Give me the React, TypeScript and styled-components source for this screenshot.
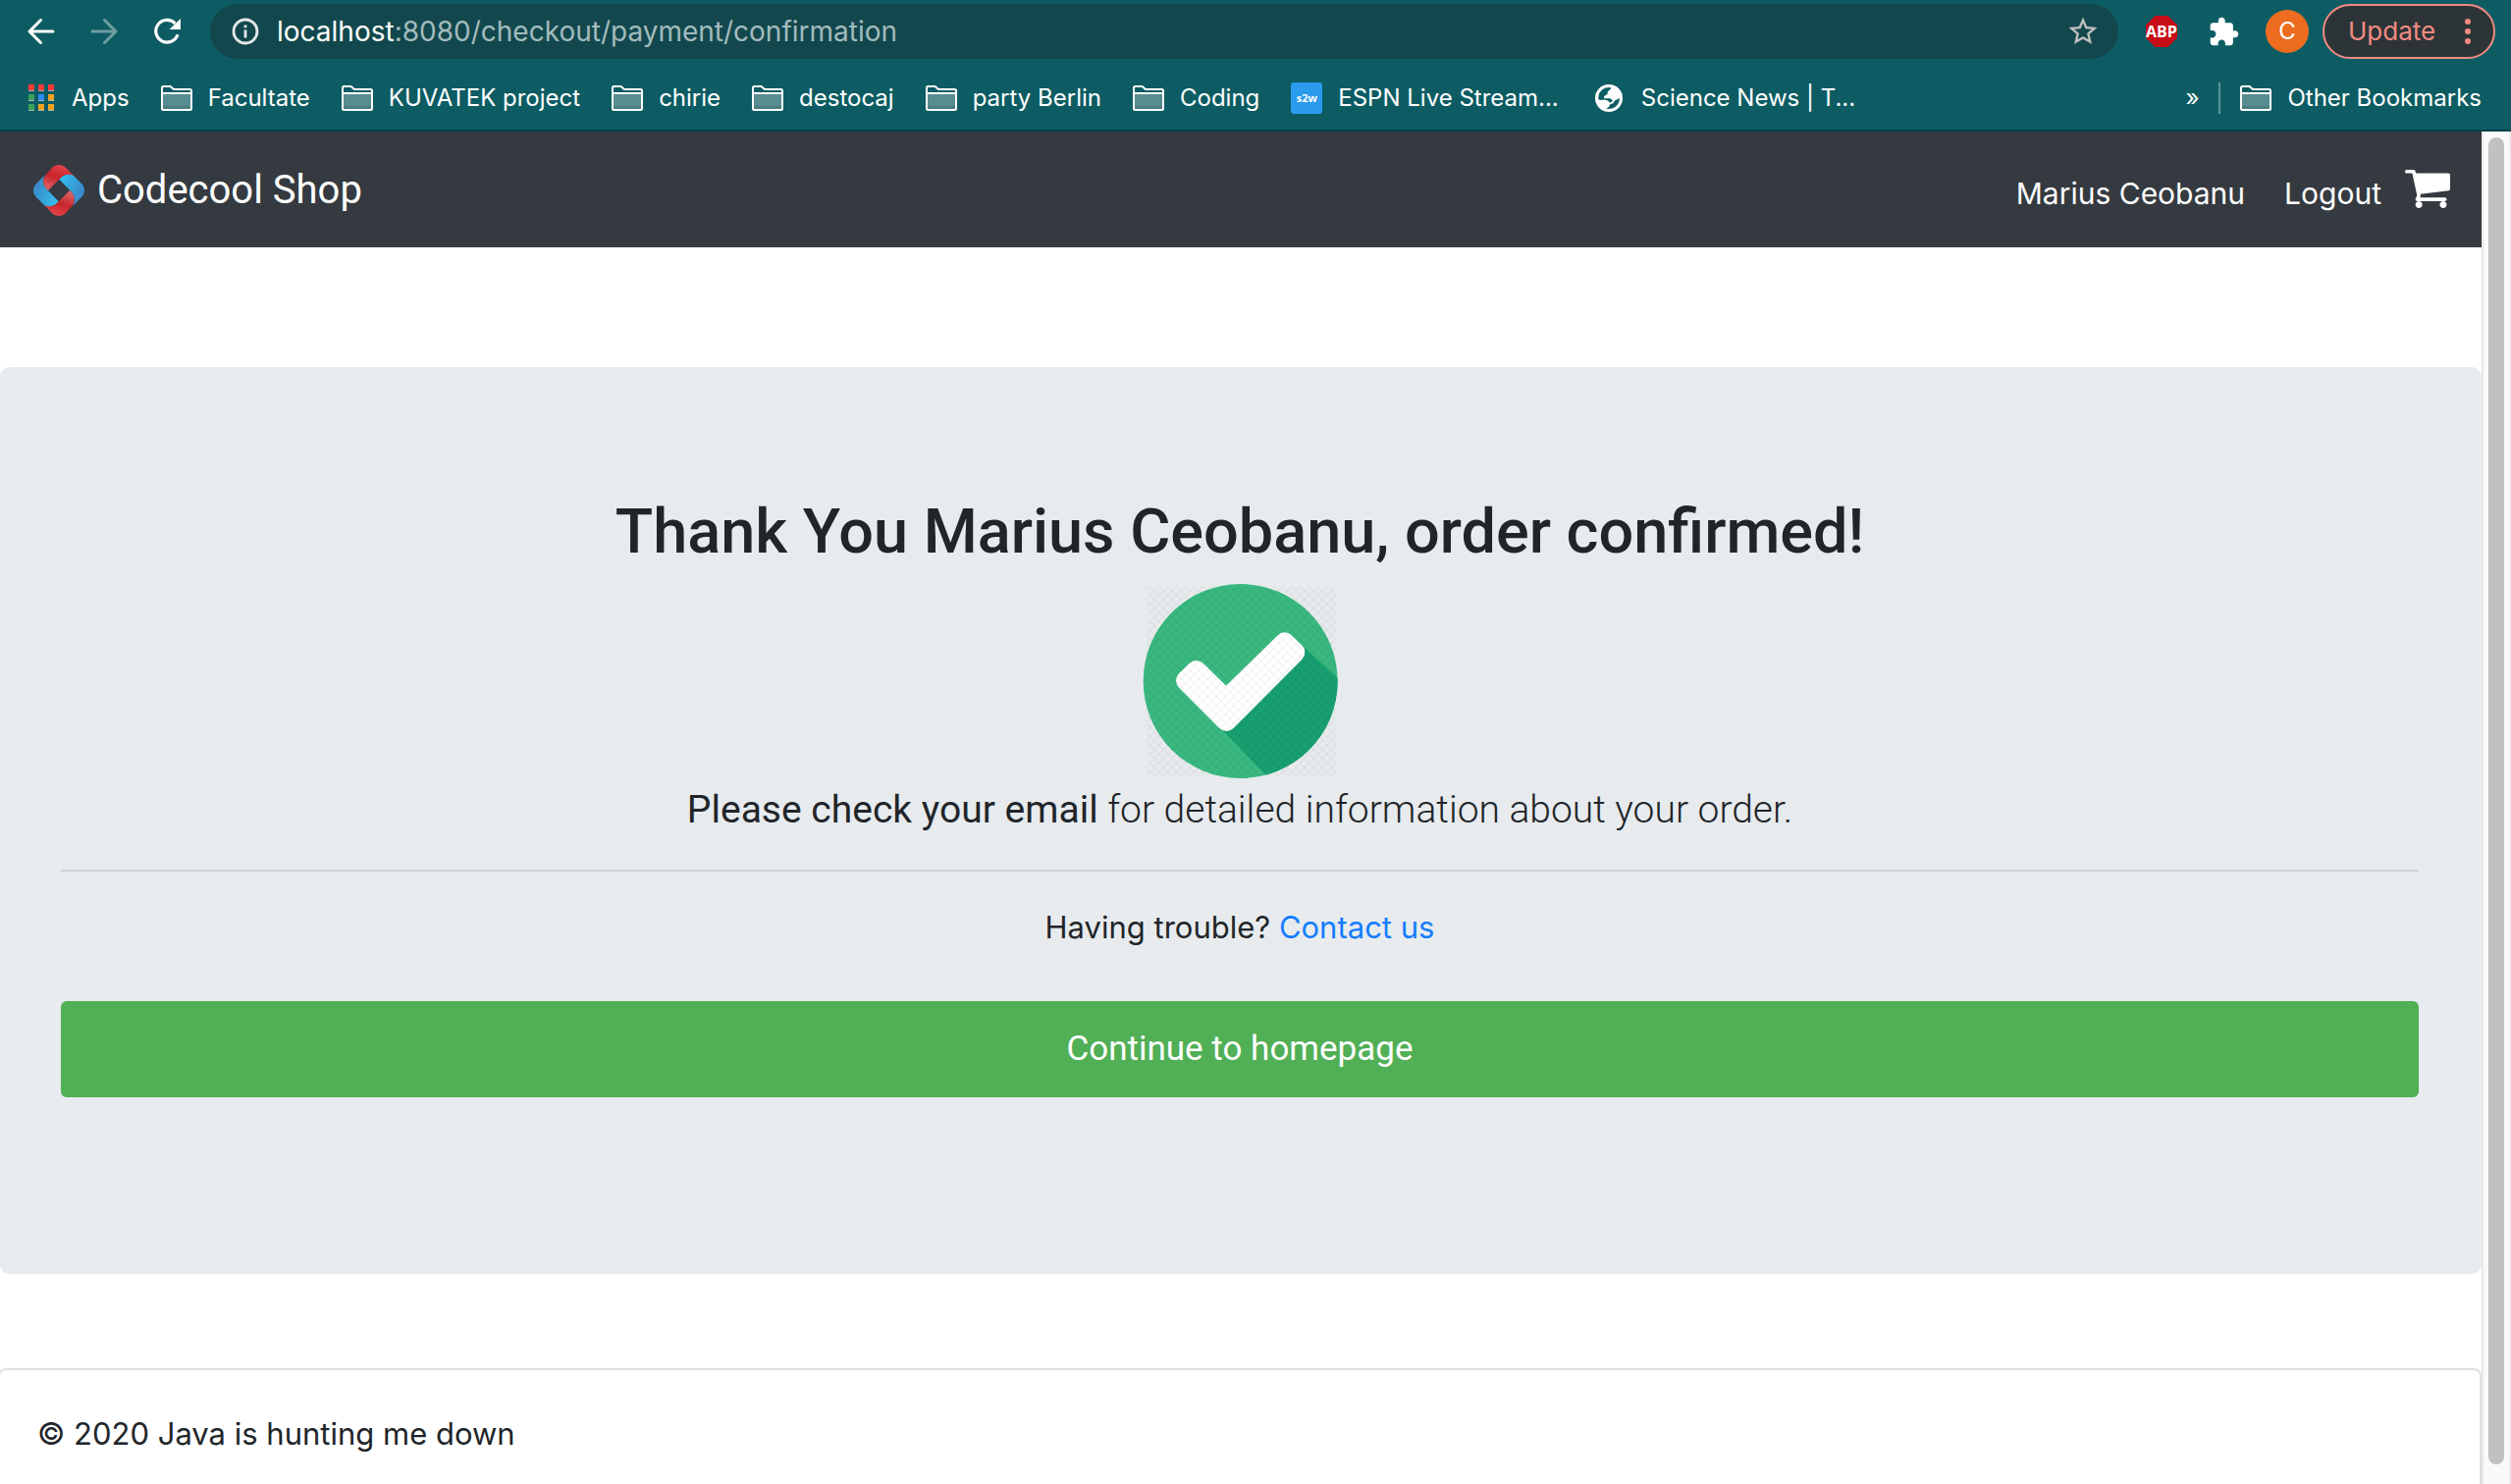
import React from "react";
import styled, { createGlobalStyle } from "styled-components";

const GlobalStyle = createGlobalStyle`
  *, *::before, *::after { box-sizing: border-box; }
  body { margin: 0; background: #ffffff; }
  button, input { font: inherit; }
`;

const displayFont = `Roboto, "Liberation Sans", sans-serif`;

const Shell = styled.div`
  display: flex;
  flex-direction: column;
  height: 100vh;
  overflow: hidden;
  font-family: Inter, "Liberation Sans", sans-serif;
  font-size: 32px;
  line-height: 50px;
  color: #212529;
`;

/* ---------- browser chrome ---------- */

const Chrome = styled.header`
  flex: none;
  background: #0d5c63;
  border-bottom: 2px solid #064147;
  color: #ffffff;
`;

const Toolbar = styled.div`
  display: flex;
  align-items: center;
  height: 64px;
  padding: 0 16px 0 10px;
`;

const IconButton = styled.button<{ $dim?: boolean }>`
  display: grid;
  place-items: center;
  flex: none;
  width: 64px;
  height: 56px;
  padding: 0;
  border: 0;
  background: none;
  color: ${(p) => (p.$dim ? "#6e9da1" : "#ffffff")};
`;

const Omnibox = styled.div`
  display: flex;
  flex: 1;
  align-items: center;
  gap: 18px;
  min-width: 0;
  height: 56px;
  margin: 0 12px;
  padding: 0 20px 0 22px;
  border-radius: 28px;
  background: #12484d;
  color: #a3bbbe;
`;

const Address = styled.div`
  flex: 1;
  overflow: hidden;
  font-size: 28px;
  line-height: 36px;
  white-space: nowrap;
  outline: 0;
`;

const Host = styled.span`
  color: #ffffff;
`;

const StarButton = styled.button`
  display: grid;
  padding: 0;
  border: 0;
  background: none;
  color: #bfbfbf;
`;

const Avatar = styled.button`
  flex: none;
  width: 44px;
  height: 44px;
  margin: 0 14px 0 10px;
  padding: 0;
  border: 0;
  border-radius: 50%;
  background: #ed6c1f;
  color: #ffffff;
  font-size: 24px;
  line-height: 44px;
`;

const UpdateButton = styled.button`
  display: flex;
  align-items: center;
  justify-content: space-between;
  flex: none;
  width: 176px;
  height: 56px;
  padding: 0 23px 0 24px;
  border: 2px solid #f28b82;
  border-radius: 28px;
  background: #2c3437;
  color: #f28b82;
  font-size: 26px;
  line-height: 36px;
`;

const BookmarksBar = styled.nav`
  display: flex;
  align-items: center;
  gap: 32px;
  height: 68px;
  padding: 4px 30px 0 29px;
`;

const Bookmark = styled.a`
  display: flex;
  align-items: center;
  gap: 16px;
  flex: none;
  color: #ffffff;
  font-size: 24px;
  line-height: 32px;
  white-space: nowrap;
  text-decoration: none;
`;

const SiteIcon = styled.span`
  display: grid;
  place-items: center;
  width: 32px;
  height: 32px;
  border-radius: 3px;
  background: #2b9ced;
  font-family: "Open Sans", sans-serif;
  font-size: 11px;
  font-weight: 700;
  line-height: 12px;
`;

const BarEnd = styled.div`
  display: flex;
  align-items: center;
  gap: 20px;
  margin-left: auto;
`;

const More = styled.button`
  padding: 0;
  border: 0;
  background: none;
  color: #ffffff;
  font-size: 24px;
  line-height: 32px;
`;

const Divider = styled.span`
  width: 2px;
  height: 32px;
  background: #5c9397;
`;

/* ---------- page ---------- */

const Viewport = styled.div`
  display: grid;
  grid-template-columns: minmax(0, 1fr) 30px;
  flex: 1;
  min-height: 0;
`;

const Page = styled.div`
  overflow: hidden;
`;

const Navbar = styled.nav`
  display: flex;
  align-items: center;
  justify-content: space-between;
  height: 118px;
  padding: 2px 32px 0 34px;
  background: #343a40;
`;

const Brand = styled.a`
  display: flex;
  align-items: center;
  gap: 13px;
  color: #ffffff;
  font-family: ${displayFont};
  font-size: 40px;
  line-height: 60px;
  text-decoration: none;
`;

const NavLinks = styled.div`
  display: flex;
  align-items: center;
  gap: 40px;
`;

const NavLink = styled.a`
  padding-top: 6px;
  color: #ffffff;
  font-size: 30px;
  text-decoration: none;
`;

const CartLink = styled.a`
  display: grid;
  margin: 0 0 4px -16px;
  color: #ffffff;
`;

const Jumbotron = styled.main`
  margin: 122px 0 96px;
  padding: 128px 64px 180px 62px;
  border-radius: 10px;
  background: #e7ebee;
  text-align: center;
`;

const Title = styled.h1`
  margin: 0 0 12px;
  font-family: ${displayFont};
  font-size: 63px;
  font-weight: 500;
  line-height: 80px;
`;

const Lead = styled.p`
  margin: 0;
  font-family: ${displayFont};
  font-size: 39px;
  font-weight: 300;
  line-height: 62px;
`;

const Strong = styled.strong`
  font-weight: 400;
`;

const Rule = styled.hr`
  height: 2px;
  margin: 30px 0 32px;
  border: 0;
  background: #d0d4d7;
`;

const Help = styled.p`
  margin: 0 0 50px;
  font-size: 31px;
`;

const ContactLink = styled.a`
  color: #147dfd;
  text-decoration: none;
`;

const ContinueButton = styled.button`
  display: block;
  width: 100%;
  height: 98px;
  border: 0;
  border-radius: 6px;
  background: #51af56;
  color: #ffffff;
  font-family: ${displayFont};
  font-size: 35px;
  line-height: 50px;
`;

const Footer = styled.footer`
  height: 160px;
  margin-left: -2px;
  padding: 40px 38px;
  border: 2px solid #dfdfdf;
  border-radius: 8px;
  font-size: 31px;
`;

const ScrollTrack = styled.div`
  display: flex;
  justify-content: center;
  padding: 6px 0 20px;
  border-right: 2px solid #ededed;
  border-left: 2px solid #e8e8e8;
  background: #fafafa;
`;

const ScrollThumb = styled.div`
  width: 16px;
  border-radius: 8px;
  background: #c1c1c1;
`;

const Picture = styled.svg`
  display: block;
  flex: none;
`;

const CheckPicture = styled(Picture)`
  margin: 0 auto;
`;

/* ---------- drawings ---------- */

const Arrow = ({ forward = false }: { forward?: boolean }) => (
  <Picture width="28" height="28" viewBox="0 0 28 28" fill="none" stroke="currentColor" strokeWidth="3" strokeLinecap="round" strokeLinejoin="round">
    {forward ? <path d="M2 14H26M14.5 2.5L26 14L14.5 25.5" /> : <path d="M26 14H2M13.5 2.5L2 14L13.5 25.5" />}
  </Picture>
);

const Reload = () => (
  <Picture width="28" height="28" viewBox="0 0 28 28">
    <path d="M22.4 5.8A11.4 11.4 0 1 0 25 17.3" fill="none" stroke="currentColor" strokeWidth="3.2" />
    <path d="M28 1V12H16.5Z" fill="currentColor" />
  </Picture>
);

const Info = () => (
  <Picture width="28" height="28" viewBox="0 0 28 28">
    <circle cx="14" cy="14" r="12" fill="none" stroke="#e4e8e9" strokeWidth="2.8" />
    <path d="M12.6 12.4h2.8v8.2h-2.8zM12.6 7.4h2.8v2.8h-2.8z" fill="#e4e8e9" />
  </Picture>
);

const Star = () => (
  <Picture width="32" height="32" viewBox="1 1 22 22" fill="currentColor">
    <path d="M22 9.24l-7.19-.62L12 2 9.19 8.63 2 9.24l5.46 4.73L5.82 21 12 17.27 18.18 21l-1.63-7.03L22 9.24zM12 15.4l-3.76 2.27 1-4.28-3.32-2.88 4.38-.38L12 6.1l1.71 4.04 4.38.38-3.32 2.88 1 4.28L12 15.4z" />
  </Picture>
);

const AdBlock = () => (
  <Picture width="32" height="32" viewBox="0 0 32 32">
    <path d="M9.5 0H22.5L32 9.5V22.5L22.5 32H9.5L0 22.5V9.5Z" fill="#c70d17" />
    <text x="16" y="22" fill="#ffffff" fontFamily="Open Sans, sans-serif" fontSize="16" fontWeight="700" textAnchor="middle">ABP</text>
  </Picture>
);

const Puzzle = () => (
  <Picture width="30" height="30" viewBox="1.5 .5 22 22" fill="currentColor">
    <path d="M20.5 11H19V7c0-1.1-.9-2-2-2h-4V3.5C13 2.12 11.88 1 10.5 1S8 2.12 8 3.5V5H4c-1.1 0-1.99.9-1.99 2v3.8H3.5c1.49 0 2.7 1.21 2.7 2.7s-1.21 2.7-2.7 2.7H2V20c0 1.1.9 2 2 2h3.8v-1.5c0-1.49 1.21-2.7 2.7-2.7 1.49 0 2.7 1.21 2.7 2.7V22H17c1.1 0 2-.9 2-2v-4h1.5c1.38 0 2.5-1.12 2.5-2.5S21.88 11 20.5 11z" />
  </Picture>
);

const Dots = () => (
  <Picture width="6" height="28" viewBox="0 0 6 28" fill="currentColor">
    <circle cx="3" cy="4" r="3" />
    <circle cx="3" cy="14" r="3" />
    <circle cx="3" cy="24" r="3" />
  </Picture>
);

const appColours = ["#f63b37", "#f63b37", "#f63b37", "#3ba05c", "#2a8cf4", "#f3a21f", "#3ba05c", "#f3a21f", "#f3a21f"];

const AppsGrid = () => (
  <Picture width="28" height="28" viewBox="0 0 28 28">
    {appColours.map((colour, i) => (
      <g key={i} transform={`translate(${(i % 3) * 10} ${Math.floor(i / 3) * 10})`}>
        <rect width="6" height="7" fill="#9fb5b5" />
        <rect width="6" height="6" fill={colour} />
      </g>
    ))}
  </Picture>
);

const Folder = () => (
  <Picture width="32" height="26" viewBox="0 0 32 26">
    <path d="M2 9H30V24H2Z" fill="#578d90" />
    <path d="M2 21H30V24H2Z" fill="#4a7d7f" />
    <path d="M1 23.5V2.5Q1 1 2.5 1H9.5L13 4H29.5Q31 4 31 5.5V23.5Q31 25 29.5 25H2.5Q1 25 1 23.5ZM1 8H31" fill="none" stroke="#ffffff" strokeWidth="2" />
  </Picture>
);

const Globe = () => (
  <Picture width="36" height="28" viewBox="-5 0 36 28">
    <circle cx="14" cy="14" r="14" fill="#ffffff" />
    <path d="M16 3.2C10 2.500 4.800 6 3.500 11.500C3.200 13 3.200 14 3.400 15.200C5 16.500 8 15.500 10.500 15.800C12.500 16.200 14 17.200 14.500 18.500L17.500 17.500C17.800 15.500 16.500 14.200 14.200 14.200H9C9 12.500 9.200 11 11.500 10.800C13 10.500 12.500 9 12.800 7.800C13 6 16 6.200 16 3.200Z" fill="#0d5c63" />
    <path d="M11 24.500C16 26 22 23.500 24.200 18C24.800 16.500 24.900 15 24.700 13.500C23 16 20 15.500 19.300 17.800C18.500 20.500 15 19.500 14.600 21.500C14.400 23.500 12.500 23.800 11 24.500Z" fill="#0d5c63" />
  </Picture>
);

const redBand = "M26 0C28.600 0 31 1 32.800 2.800L40.500 10.500C36 9.200 32 9.700 29 12L15 26C10.500 22 8 16.500 12.500 10.200L19.200 2.800C21 1 23.400 0 26 0Z";
const blueBand = "M26.300 14.800L29 12C32 9.500 37 8.800 40.500 10.500L49.200 19.200C53 23 53 29 49.200 32.800L40 42C43.500 36 42.500 31 37.200 26Z";

const Logo = () => (
  <Picture width="52" height="52" viewBox="0 0 52 52">
    <defs>
      <linearGradient id="logoRed" x1="0.7" y1="0" x2="0.3" y2="1">
        <stop offset="0" stopColor="#e5474b" />
        <stop offset="0.5" stopColor="#c8242b" />
        <stop offset="1" stopColor="#de6468" />
      </linearGradient>
      <linearGradient id="logoBlue" x1="0" y1="0" x2="1" y2="0.7">
        <stop offset="0" stopColor="#35c3f0" />
        <stop offset="1" stopColor="#3a83c6" />
      </linearGradient>
    </defs>
    {[0, 180].map((angle) => (
      <g key={angle} transform={`rotate(${angle} 26 26)`}>
        <path d={blueBand} fill="url(#logoBlue)" />
      </g>
    ))}
    {[0, 180].map((angle) => (
      <g key={angle} transform={`rotate(${angle} 26 26)`}>
        <path d={redBand} fill="url(#logoRed)" />
      </g>
    ))}
  </Picture>
);

const Cart = () => (
  <Picture width="46" height="39" viewBox="0 256 1664 1408" fill="currentColor">
    <path d="M640 1536q0 52-38 90t-90 38-90-38-38-90 38-90 90-38 90 38 38 90zm896 0q0 52-38 90t-90 38-90-38-38-90 38-90 90-38 90 38 38 90zm128-1088v512q0 24-16.500 42.500t-40.500 21.500l-1044 122q13 60 13 70 0 16-24 64h920q26 0 45 19t19 45-19 45-45 19h-1024q-26 0-45-19t-19-45q0-11 8-31.500t16-36 21.500-40 15.500-29.500l-177-823h-204q-26 0-45-19t-19-45 19-45 45-19h256q16 0 28.500 6.500t19.500 15.500 13 24.500 8 26 5.500 29.500 4.500 26h1201q26 0 45 19t19 45z" />
  </Picture>
);

const Confirmed = () => (
  <CheckPicture width="200" height="200" viewBox="190 71 600 600" role="img" aria-label="Order confirmed">
    <defs>
      <clipPath id="disc">
        <circle cx="492" cy="371" r="297" />
      </clipPath>
      <pattern id="mesh" width="27" height="27" patternUnits="userSpaceOnUse">
        <path d="M0 0L27 27M27 0L0 27" stroke="#000000" strokeOpacity="0.07" strokeWidth="3" />
      </pattern>
    </defs>
    <circle cx="492" cy="371" r="297" fill="#39b87f" />
    <path d="M438 522L640 730H800V372L689 270Z" fill="#18a071" clipPath="url(#disc)" />
    <path d="M325 369L357 338L448 427L627 252L659 283L449 494Z" fill="#ffffff" stroke="#ffffff" strokeWidth="60" strokeLinejoin="round" />
    <rect x="205" y="82" width="577" height="578" fill="url(#mesh)" />
  </CheckPicture>
);

const folders = ["Facultate", "KUVATEK project", "chirie", "destocaj", "party Berlin", "Coding"];

export default function App() {
  return (
    <Shell>
      <GlobalStyle />
      <Chrome>
        <Toolbar>
          <IconButton aria-label="Back"><Arrow /></IconButton>
          <IconButton aria-label="Forward" $dim><Arrow forward /></IconButton>
          <IconButton aria-label="Reload"><Reload /></IconButton>
          <Omnibox>
            <Info />
            <Address role="textbox" aria-label="Address" tabIndex={0}>
              <Host>localhost</Host>:8080/checkout/payment/confirmation
            </Address>
            <StarButton aria-label="Bookmark this page"><Star /></StarButton>
          </Omnibox>
          <IconButton aria-label="Adblock Plus"><AdBlock /></IconButton>
          <IconButton aria-label="Extensions"><Puzzle /></IconButton>
          <Avatar>C</Avatar>
          <UpdateButton>Update<Dots /></UpdateButton>
        </Toolbar>
        <BookmarksBar>
          <Bookmark href="#"><AppsGrid />Apps</Bookmark>
          {folders.map((name) => (
            <Bookmark key={name} href="#"><Folder />{name}</Bookmark>
          ))}
          <Bookmark href="#"><SiteIcon>s2w</SiteIcon>ESPN Live Stream...</Bookmark>
          <Bookmark href="#"><Globe />Science News | T...</Bookmark>
          <BarEnd>
            <More>»</More>
            <Divider />
            <Bookmark href="#"><Folder />Other Bookmarks</Bookmark>
          </BarEnd>
        </BookmarksBar>
      </Chrome>
      <Viewport>
        <Page>
          <Navbar>
            <Brand href="#"><Logo />Codecool Shop</Brand>
            <NavLinks>
              <NavLink href="#">Marius Ceobanu</NavLink>
              <NavLink href="#">Logout</NavLink>
              <CartLink href="#" aria-label="Cart"><Cart /></CartLink>
            </NavLinks>
          </Navbar>
          <Jumbotron>
            <Title>Thank You Marius Ceobanu, order confirmed!</Title>
            <Confirmed />
            <Lead><Strong>Please check your email</Strong> for detailed information about your order.</Lead>
            <Rule />
            <Help>Having trouble? <ContactLink href="#">Contact us</ContactLink></Help>
            <ContinueButton>Continue to homepage</ContinueButton>
          </Jumbotron>
          <Footer>© 2020 Java is hunting me down</Footer>
        </Page>
        <ScrollTrack><ScrollThumb /></ScrollTrack>
      </Viewport>
    </Shell>
  );
}
